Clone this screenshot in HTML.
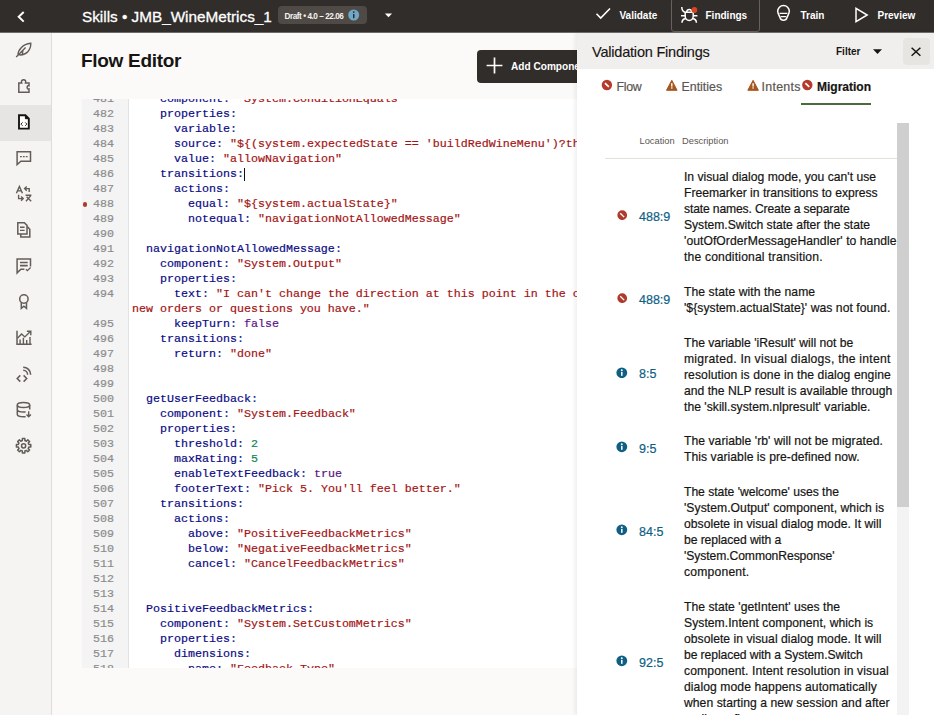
<!DOCTYPE html>
<html>
<head>
<meta charset="utf-8">
<title>Flow Editor</title>
<style>
*{box-sizing:border-box;margin:0;padding:0}
html,body{width:934px;height:715px;overflow:hidden;background:#fbfaf9;font-family:"Liberation Sans",sans-serif;color:#161513}
#top{position:absolute;left:0;top:0;width:934px;height:32px;background:#312d2a;color:#fff}
#top .t{position:absolute;white-space:nowrap;font-weight:bold;font-size:10px;top:7.7px;line-height:15px}
#top svg{position:absolute;left:0;top:0;z-index:2}
#crumb{position:absolute;left:82px;top:7px;font-size:15.3px;line-height:20px;white-space:nowrap}
#badge{position:absolute;left:278px;top:6px;width:89px;height:18px;background:#4f4a45;border-radius:4px;font-size:8.2px;font-weight:bold;line-height:21px;padding-left:6.5px;white-space:nowrap;color:#f4f2f0;letter-spacing:-0.45px;overflow:hidden}
#fbtn{position:absolute;left:671px;top:-2px;width:89px;height:34px;border:1px solid #67625d;border-radius:3px}
#side{position:absolute;left:0;top:32px;width:52px;height:683px;background:#f5f4f2;border-right:1px solid #dfdcd9}
#side .sel{position:absolute;left:0;top:73px;width:51px;height:36px;background:#e7e5e3}
#icons{position:absolute;left:0;top:0;width:52px;height:715px;fill:none;stroke:#625d58;stroke-width:1.5}
#h1{position:absolute;left:81px;top:49px;font-size:19px;line-height:24px;font-weight:bold;letter-spacing:-0.3px;white-space:nowrap}
#addbtn{position:absolute;left:477px;top:50px;width:140px;height:33px;background:#312d2a;border-radius:4px;color:#fff;font-size:10.1px;font-weight:bold;line-height:33px;padding-left:34px;white-space:nowrap}
#addbtn svg{position:absolute;left:8.7px;top:7.4px}
#editor{position:absolute;left:82px;top:99px;width:495px;height:569px;background:#fff;overflow:hidden}
#gutter{position:absolute;left:0;top:0;width:47px;height:569px;background:#f4f4f4;border-right:1px solid #e2e2e2}
#code{position:absolute;left:0;top:-6.6px;width:495px;font-family:"Liberation Mono",monospace;font-size:11.67px;line-height:15px}
.ln{position:relative;height:15px}
.ln i{position:absolute;left:0;width:32px;text-align:right;color:#8c8c8c;font-style:normal}
.ln b{position:absolute;left:50px;white-space:pre;font-weight:normal;color:#0c0c84}
.ln u{position:absolute;left:0.6px;top:4.6px;width:4.6px;height:4.6px;border-radius:50%;background:#b03a2a}
.ln em{position:absolute;right:-1.5px;top:1px;width:1.3px;height:13px;background:#111}
.k{color:#0c0c84}.p{color:#10208c}.s{color:#a31515}.n{color:#098658}.c{color:#5a1486}
#panel{position:absolute;left:577px;top:32px;width:357px;height:683px;background:#fff;box-shadow:-2px 0 4px rgba(0,0,0,.07)}
#phead{position:absolute;left:0;top:0;width:357px;height:37px;background:#f1efed}
#ptitle{position:absolute;left:15px;top:10px;font-size:14.5px;line-height:20px;white-space:nowrap;letter-spacing:-0.2px}
#filter{position:absolute;left:259px;top:13px;font-size:10px;line-height:14px;font-weight:bold;color:#161513}
#xbtn{position:absolute;left:326px;top:6px;width:27px;height:27px;background:#e7e5e2;border-radius:4px}
#panel>svg{position:absolute;left:0;top:0}
.tab{position:absolute;top:46.8px;font-size:12.4px;line-height:16px;color:#5b5652;white-space:nowrap}
#tabline{position:absolute;left:224px;top:71px;width:70px;height:2px;background:#4a6b3a}
#sb{position:absolute;left:320px;top:91px;width:12px;height:592px;background:#f3f3f3}
#sb div{position:absolute;left:0;top:0;width:12px;height:384px;background:#cfcfcf}
.th{position:absolute;top:102.5px;font-size:9.3px;line-height:13px;color:#5b5652;white-space:nowrap}
#hr{position:absolute;left:28px;top:126px;width:292px;height:1px;background:#e4e1dd}
#rows{position:absolute;left:0;top:128px;width:320px}
.row{position:relative;width:320px}
.row .ic{position:absolute;left:39.6px;top:50%;margin-top:-7.7px;width:10.4px;height:10.4px}
.row .ii{left:39px;margin-top:-8.2px;width:11.6px;height:11.6px}
.row .loc{position:absolute;left:62px;top:50%;margin-top:-8.8px;font-size:12.5px;line-height:16px;color:#0f5f85;white-space:nowrap}
.row .desc{position:absolute;left:107px;top:9.1px;font-size:12.15px;line-height:16px;white-space:nowrap;color:#161513}
#crumb{-webkit-text-stroke:0.3px}
#ptitle{-webkit-text-stroke:0.15px}
.row .desc,.row .loc,.tab{-webkit-text-stroke:0.2px}
#code{-webkit-text-stroke:0.2px}
</style>
</head>
<body>
<div id="top">
<svg width="934" height="32" viewBox="0 0 934 32" fill="none" stroke="#fff" stroke-width="1.6">
<path d="M23.7 12L18.7 16.8L23.7 21.6" stroke-width="2"/>
<path d="M384.9 13.5H392.1L388.5 17.3Z" fill="#fff" stroke="none"/>
<circle cx="353.7" cy="15" r="5.5" fill="#6fa8c8" stroke="none"/>
<rect x="353" y="14" width="1.5" height="4.2" fill="#312d2a" stroke="none"/><circle cx="353.75" cy="12.1" r="0.95" fill="#312d2a" stroke="none"/>
<path d="M596.5 13.8L600.7 18L610 8.5"/>
<g stroke-width="1.5">
<path d="M685.2 12.2H693.2V16.2A4 4.2 0 0 1 685.2 16.2Z"/>
<path d="M686.6 12A2.7 3.2 0 0 1 691.9 12"/>
<path d="M681.8 7C681.8 10 683 11.8 685.2 12.4M695.8 10.5C695.3 11.6 694.5 12.1 693.2 12.4"/>
<path d="M681 15.8H685.2M693.2 15.8H697.4"/>
<path d="M682 22.8C682 20.5 683.4 19 685.8 18.6M696.4 22.8C696.4 20.5 695 19 692.6 18.6"/>
</g>
<circle cx="694.4" cy="10" r="2.9" fill="#d6451f" stroke="none"/>
<g stroke-width="1.5">
<path d="M783.5 5.5A5.8 5.8 0 0 1 789.3 11.3C789.3 13.6 787.6 15.5 786.8 18C786.4 19.6 785.5 20.2 783.5 20.2C781.5 20.2 780.6 19.6 780.2 18C779.4 15.5 777.7 13.6 777.7 11.3A5.8 5.8 0 0 1 783.5 5.5Z"/>
<path d="M779.6 13.3H787.4M780.7 16.7H786.3" stroke-width="1.3"/>
</g>
<path d="M856 8.3V21.7L867.2 15Z" stroke-width="1.5"/>
</svg>
<div id="crumb">Skills • JMB_WineMetrics_1</div>
<div id="badge">Draft • 4.0 – 22.06</div>
<div class="t" style="left:619.5px">Validate</div>
<div id="fbtn"></div>
<div class="t" style="left:705.5px">Findings</div>
<div class="t" style="left:800.5px">Train</div>
<div class="t" style="left:877.5px">Preview</div>
</div>
<div style="position:absolute;left:0;top:32px;width:934px;height:1px;background:#6e6a67;z-index:5"></div>
<div id="side"><div class="sel"></div></div>
<svg id="icons" viewBox="0 0 52 715">
<!-- feather -->
<path d="M18 54.9C17.9 50.4 22.4 44.2 30.8 43.3C30.9 49.8 26.6 55.5 19.2 54.9M16.2 56.9L25.6 47.6M22.3 53.6L22.9 50.6" stroke-width="1.4"/>
<!-- puzzle -->
<path d="M18.8 92.2V82.9H21.7C21 80.7 22.1 79.8 23.6 79.8C25.1 79.8 26.2 80.7 25.5 82.9H29V85.7C26.5 85 26.5 89.7 29 89V92.2Z"/>
<!-- file code (selected) -->
<g stroke="#161513" stroke-width="1.9">
<path d="M19 115.3H25.4L28.8 118.7V128.6H19Z" fill="#fff"/>
<path d="M25.4 115.3V118.7H28.8Z" fill="#161513" stroke-width="1"/>
<path d="M22.6 122.4L20.9 124.1L22.6 125.8M25.2 122.4L26.9 124.1L25.2 125.8" stroke-width="0.9"/>
</g>
<!-- chat dots -->
<path d="M17.1 151.8H30.5V161.3H20.9L17.1 164.6Z"/>
<path d="M20 156.7H21.8M22.9 156.7H24.7M25.8 156.7H27.6" stroke-width="1.2"/>
<!-- translate -->
<g stroke-width="1.4">
<path d="M16.4 193.2L19.4 186.4L22.4 193.2M17.5 190.9H21.3"/>
<path d="M29.2 192V188.6H24.8M26.7 186.5L24.6 188.6L26.7 190.7"/>
<path d="M18.6 194.8V198.6H23M21.1 196.5L23.2 198.6L21.1 200.7"/>
<path d="M25.6 195.3H31.4M31 195.4L26 201.2M26.6 196.8L31.2 201.2"/>
</g>
<!-- docs -->
<path d="M17.8 222.8H24.4L27 225.4V234H17.8Z"/>
<path d="M20 227.3H24.6M20 230.4H24.6" stroke-width="1.4"/>
<path d="M27.2 226.6L29.8 229.2V237.1H20.8V234"/>
<!-- chat lines -->
<path d="M30.5 266.4V259.1H17.1V272.9L20.9 269.3H24.4"/>
<path d="M20 262.5H27.7M20 265.6H27.7" stroke-width="1.6"/>
<path d="M25.9 269.2L27.4 270.7L30.6 267.5" stroke-width="1.3"/>
<!-- award -->
<circle cx="23.9" cy="299" r="4.2"/>
<path d="M21.3 302.6V308.4L23.9 306.2L26.5 308.4V302.6"/>
<!-- chart -->
<path d="M17 330.8V344.3H31.6"/>
<path d="M20.1 344V339.6M23.4 344V337.8M26.7 344V340M30 344V337" stroke-width="1.4"/>
<path d="M17.4 338.2L21.6 333.9L24.8 336.9L30.4 331.6M26.9 331.3H30.8V335.2" stroke-width="1.4"/>
<!-- code signal -->
<path d="M20.3 375.4L17.2 378.5L20.3 381.6M23.6 375.4L26.7 378.5L23.6 381.6"/>
<path d="M23.2 367.2A7.5 7.5 0 0 1 30.7 374.7M23.2 370.3A4.4 4.4 0 0 1 27.6 374.7"/>
<!-- database -->
<ellipse cx="23.5" cy="405" rx="6.2" ry="2.5"/>
<path d="M17.3 405V414.3C17.3 415.8 20 416.8 23.5 416.8H25.6M29.7 405V409.6M17.3 409.6C17.3 411.1 20 412.1 23.5 412.1H25.6"/>
<path d="M28.7 411.3V416.8M26.5 414.5L28.7 416.8L30.9 414.5" stroke-width="1.4"/>
<!-- gear -->
<path d="M30.79 444.54L30.79 447.06L28.85 447.06L28.20 448.62L29.57 450.00L27.80 451.77L26.42 450.40L24.86 451.05L24.86 452.99L22.34 452.99L22.34 451.05L20.78 450.40L19.40 451.77L17.63 450.00L19.00 448.62L18.35 447.06L16.41 447.06L16.41 444.54L18.35 444.54L19.00 442.98L17.63 441.60L19.40 439.83L20.78 441.20L22.34 440.55L22.34 438.61L24.86 438.61L24.86 440.55L26.42 441.20L27.80 439.83L29.57 441.60L28.20 442.98L28.85 444.54Z" stroke-linejoin="round"/><circle cx="23.6" cy="445.8" r="2.1"/>
</svg>
<div id="h1">Flow Editor</div>
<div id="addbtn"><svg width="17" height="17" viewBox="0 0 17 17"><path d="M8.5 0.6V16.4M0.6 8.5H16.4" stroke="#fff" stroke-width="1.7" fill="none"/></svg>Add Component</div>
<div id="editor"><div id="gutter"></div><div id="code">
<div class="ln"><i>481</i><b>    <span class="k">component</span><span class="p">:</span> <span class="s">"System.ConditionEquals"</span></b></div>
<div class="ln"><i>482</i><b>    <span class="k">properties</span><span class="p">:</span></b></div>
<div class="ln"><i>483</i><b>      <span class="k">variable</span><span class="p">:</span></b></div>
<div class="ln"><i>484</i><b>      <span class="k">source</span><span class="p">:</span> <span class="s">"${(system.expectedState == 'buildRedWineMenu')?then('allowNavigation','denyNavigation')}"</span></b></div>
<div class="ln"><i>485</i><b>      <span class="k">value</span><span class="p">:</span> <span class="s">"allowNavigation"</span></b></div>
<div class="ln"><i>486</i><b>    <span class="k">transitions</span><span class="p">:</span><em></em></b></div>
<div class="ln"><i>487</i><b>      <span class="k">actions</span><span class="p">:</span></b></div>
<div class="ln"><u></u><i>488</i><b>        <span class="k">equal</span><span class="p">:</span> <span class="s">"${system.actualState}"</span></b></div>
<div class="ln"><i>489</i><b>        <span class="k">notequal</span><span class="p">:</span> <span class="s">"navigationNotAllowedMessage"</span></b></div>
<div class="ln"><i>490</i><b></b></div>
<div class="ln"><i>491</i><b>  <span class="k">navigationNotAllowedMessage</span><span class="p">:</span></b></div>
<div class="ln"><i>492</i><b>    <span class="k">component</span><span class="p">:</span> <span class="s">"System.Output"</span></b></div>
<div class="ln"><i>493</i><b>    <span class="k">properties</span><span class="p">:</span></b></div>
<div class="ln"><i>494</i><b>      <span class="k">text</span><span class="p">:</span> <span class="s">"I can't change the direction at this point in the conversation. Please let me know if there are any</span></b></div>
<div class="ln"><i></i><b><span class="s">new orders or questions you have."</span></b></div>
<div class="ln"><i>495</i><b>      <span class="k">keepTurn</span><span class="p">:</span> <span class="c">false</span></b></div>
<div class="ln"><i>496</i><b>    <span class="k">transitions</span><span class="p">:</span></b></div>
<div class="ln"><i>497</i><b>      <span class="k">return</span><span class="p">:</span> <span class="s">"done"</span></b></div>
<div class="ln"><i>498</i><b></b></div>
<div class="ln"><i>499</i><b></b></div>
<div class="ln"><i>500</i><b>  <span class="k">getUserFeedback</span><span class="p">:</span></b></div>
<div class="ln"><i>501</i><b>    <span class="k">component</span><span class="p">:</span> <span class="s">"System.Feedback"</span></b></div>
<div class="ln"><i>502</i><b>    <span class="k">properties</span><span class="p">:</span></b></div>
<div class="ln"><i>503</i><b>      <span class="k">threshold</span><span class="p">:</span> <span class="n">2</span></b></div>
<div class="ln"><i>504</i><b>      <span class="k">maxRating</span><span class="p">:</span> <span class="n">5</span></b></div>
<div class="ln"><i>505</i><b>      <span class="k">enableTextFeedback</span><span class="p">:</span> <span class="c">true</span></b></div>
<div class="ln"><i>506</i><b>      <span class="k">footerText</span><span class="p">:</span> <span class="s">"Pick 5. You'll feel better."</span></b></div>
<div class="ln"><i>507</i><b>    <span class="k">transitions</span><span class="p">:</span></b></div>
<div class="ln"><i>508</i><b>      <span class="k">actions</span><span class="p">:</span></b></div>
<div class="ln"><i>509</i><b>        <span class="k">above</span><span class="p">:</span> <span class="s">"PositiveFeedbackMetrics"</span></b></div>
<div class="ln"><i>510</i><b>        <span class="k">below</span><span class="p">:</span> <span class="s">"NegativeFeedbackMetrics"</span></b></div>
<div class="ln"><i>511</i><b>        <span class="k">cancel</span><span class="p">:</span> <span class="s">"CancelFeedbackMetrics"</span></b></div>
<div class="ln"><i>512</i><b></b></div>
<div class="ln"><i>513</i><b></b></div>
<div class="ln"><i>514</i><b>  <span class="k">PositiveFeedbackMetrics</span><span class="p">:</span></b></div>
<div class="ln"><i>515</i><b>    <span class="k">component</span><span class="p">:</span> <span class="s">"System.SetCustomMetrics"</span></b></div>
<div class="ln"><i>516</i><b>    <span class="k">properties</span><span class="p">:</span></b></div>
<div class="ln"><i>517</i><b>      <span class="k">dimensions</span><span class="p">:</span></b></div>
<div class="ln"><i>518</i><b>        <span class="k">name</span><span class="p">:</span> <span class="s">"Feedback Type"</span></b></div>
</div></div>
<div id="panel">
<div id="phead"></div>
<div id="ptitle">Validation Findings</div>
<div id="filter">Filter</div>
<div id="xbtn"></div>
<svg width="357" height="120" viewBox="577 32 357 120">
<path d="M873 49.3H882L877.5 53.9Z" fill="#161513"/>
<path d="M911.6 47.8L920.4 55.8M920.4 47.8L911.6 55.8" stroke="#161513" stroke-width="1.5" fill="none"/>
<circle cx="606.9" cy="85" r="5.2" fill="#b53a2b"/><path d="M604.9499999999999 83.05L608.85 86.95" stroke="#fff" stroke-width="1.7"/><path d="M671.8 80.3L677.1 90.3H666.5Z" fill="#a6561f" stroke="#a6561f" stroke-width="1" stroke-linejoin="round"/><rect x="671.0999999999999" y="83.19999999999999" width="1.4" height="3.4" fill="#fff"/><rect x="671.0999999999999" y="87.3" width="1.4" height="1.3" fill="#fff"/><path d="M753.0999999999999 80.3L758.4 90.3H747.8Z" fill="#a6561f" stroke="#a6561f" stroke-width="1" stroke-linejoin="round"/><rect x="752.3999999999999" y="83.19999999999999" width="1.4" height="3.4" fill="#fff"/><rect x="752.3999999999999" y="87.3" width="1.4" height="1.3" fill="#fff"/><circle cx="807.3" cy="85" r="5.2" fill="#b53a2b"/><path d="M805.3499999999999 83.05L809.25 86.95" stroke="#fff" stroke-width="1.7"/>
</svg>
<div class="tab" style="left:39.5px;letter-spacing:-0.3px">Flow</div>
<div class="tab" style="left:104.5px">Entities</div>
<div class="tab" style="left:184.5px;letter-spacing:0.3px">Intents</div>
<div class="tab" style="left:240px;color:#161513;font-weight:bold;font-size:12px">Migration</div>
<div id="tabline"></div>
<div id="sb"><div></div></div>
<div class="th" style="left:62.5px">Location</div>
<div class="th" style="left:105px">Description</div>
<div id="hr"></div>
<div id="rows">
<div class="row" style="height:115.0px"><svg class="ic" viewBox="0 0 12 12"><circle cx="6" cy="6" r="5.6" fill="#b03a2a"/><path d="M3.2 4.3L4.3 3.2L8.8 7.7L7.7 8.8Z" fill="#fff"/></svg><span class="loc">488:9</span><div class="desc">In visual dialog mode, you can't use<br>Freemarker in transitions to express<br><span style="letter-spacing:-0.148px">state names. Create a separate</span><br><span style="letter-spacing:-0.026px">System.Switch state after the state</span><br><span style="letter-spacing:0.060px">'outOfOrderMessageHandler' to handle</span><br><span style="letter-spacing:0.162px">the conditional transition.</span></div></div>
<div class="row" style="height:51.0px"><svg class="ic" viewBox="0 0 12 12"><circle cx="6" cy="6" r="5.6" fill="#b03a2a"/><path d="M3.2 4.3L4.3 3.2L8.8 7.7L7.7 8.8Z" fill="#fff"/></svg><span class="loc">488:9</span><div class="desc"><span style="letter-spacing:0.068px">The state with the name</span><br><span style="letter-spacing:0.051px">'${system.actualState}' was not found.</span></div></div>
<div class="row" style="height:98.0px"><svg class="ic ii" viewBox="0 0 12 12"><circle cx="6" cy="6" r="5.6" fill="#0f5f85"/><rect x="5.2" y="5.1" width="1.6" height="4" fill="#fff"/><circle cx="6" cy="3.4" r="1" fill="#fff"/></svg><span class="loc">8:5</span><div class="desc">The variable 'iResult' will not be<br><span style="letter-spacing:0.242px">migrated. In visual dialogs, the intent</span><br><span style="letter-spacing:0.076px">resolution is done in the dialog engine</span><br>and the NLP result is available through<br><span style="letter-spacing:0.027px">the 'skill.system.nlpresult' variable.</span></div></div>
<div class="row" style="height:51.0px"><svg class="ic ii" viewBox="0 0 12 12"><circle cx="6" cy="6" r="5.6" fill="#0f5f85"/><rect x="5.2" y="5.1" width="1.6" height="4" fill="#fff"/><circle cx="6" cy="3.4" r="1" fill="#fff"/></svg><span class="loc">9:5</span><div class="desc"><span style="letter-spacing:0.050px">The variable 'rb' will not be migrated.</span><br><span style="letter-spacing:0.047px">This variable is pre-defined now.</span></div></div>
<div class="row" style="height:115.0px"><svg class="ic ii" viewBox="0 0 12 12"><circle cx="6" cy="6" r="5.6" fill="#0f5f85"/><rect x="5.2" y="5.1" width="1.6" height="4" fill="#fff"/><circle cx="6" cy="3.4" r="1" fill="#fff"/></svg><span class="loc">84:5</span><div class="desc"><span style="letter-spacing:-0.033px">The state 'welcome' uses the</span><br><span style="letter-spacing:0.053px">'System.Output' component, which is</span><br><span style="letter-spacing:0.026px">obsolete in visual dialog mode. It will</span><br><span style="letter-spacing:-0.076px">be replaced with a</span><br><span style="letter-spacing:-0.082px">'System.CommonResponse'</span><br><span style="letter-spacing:0.200px">component.</span></div></div>
<div class="row" style="height:147.0px"><svg class="ic ii" viewBox="0 0 12 12"><circle cx="6" cy="6" r="5.6" fill="#0f5f85"/><rect x="5.2" y="5.1" width="1.6" height="4" fill="#fff"/><circle cx="6" cy="3.4" r="1" fill="#fff"/></svg><span class="loc">92:5</span><div class="desc"><span style="letter-spacing:0.031px">The state 'getIntent' uses the</span><br><span style="letter-spacing:0.050px">System.Intent component, which is</span><br><span style="letter-spacing:0.026px">obsolete in visual dialog mode. It will</span><br><span style="letter-spacing:-0.090px">be replaced with a System.Switch</span><br><span style="letter-spacing:0.116px">component. Intent resolution in visual</span><br><span style="letter-spacing:0.075px">dialog mode happens automatically</span><br><span style="letter-spacing:0.050px">when starting a new session and after</span><br>ending a flow.</div></div>
</div>
</div>
</body>
</html>
